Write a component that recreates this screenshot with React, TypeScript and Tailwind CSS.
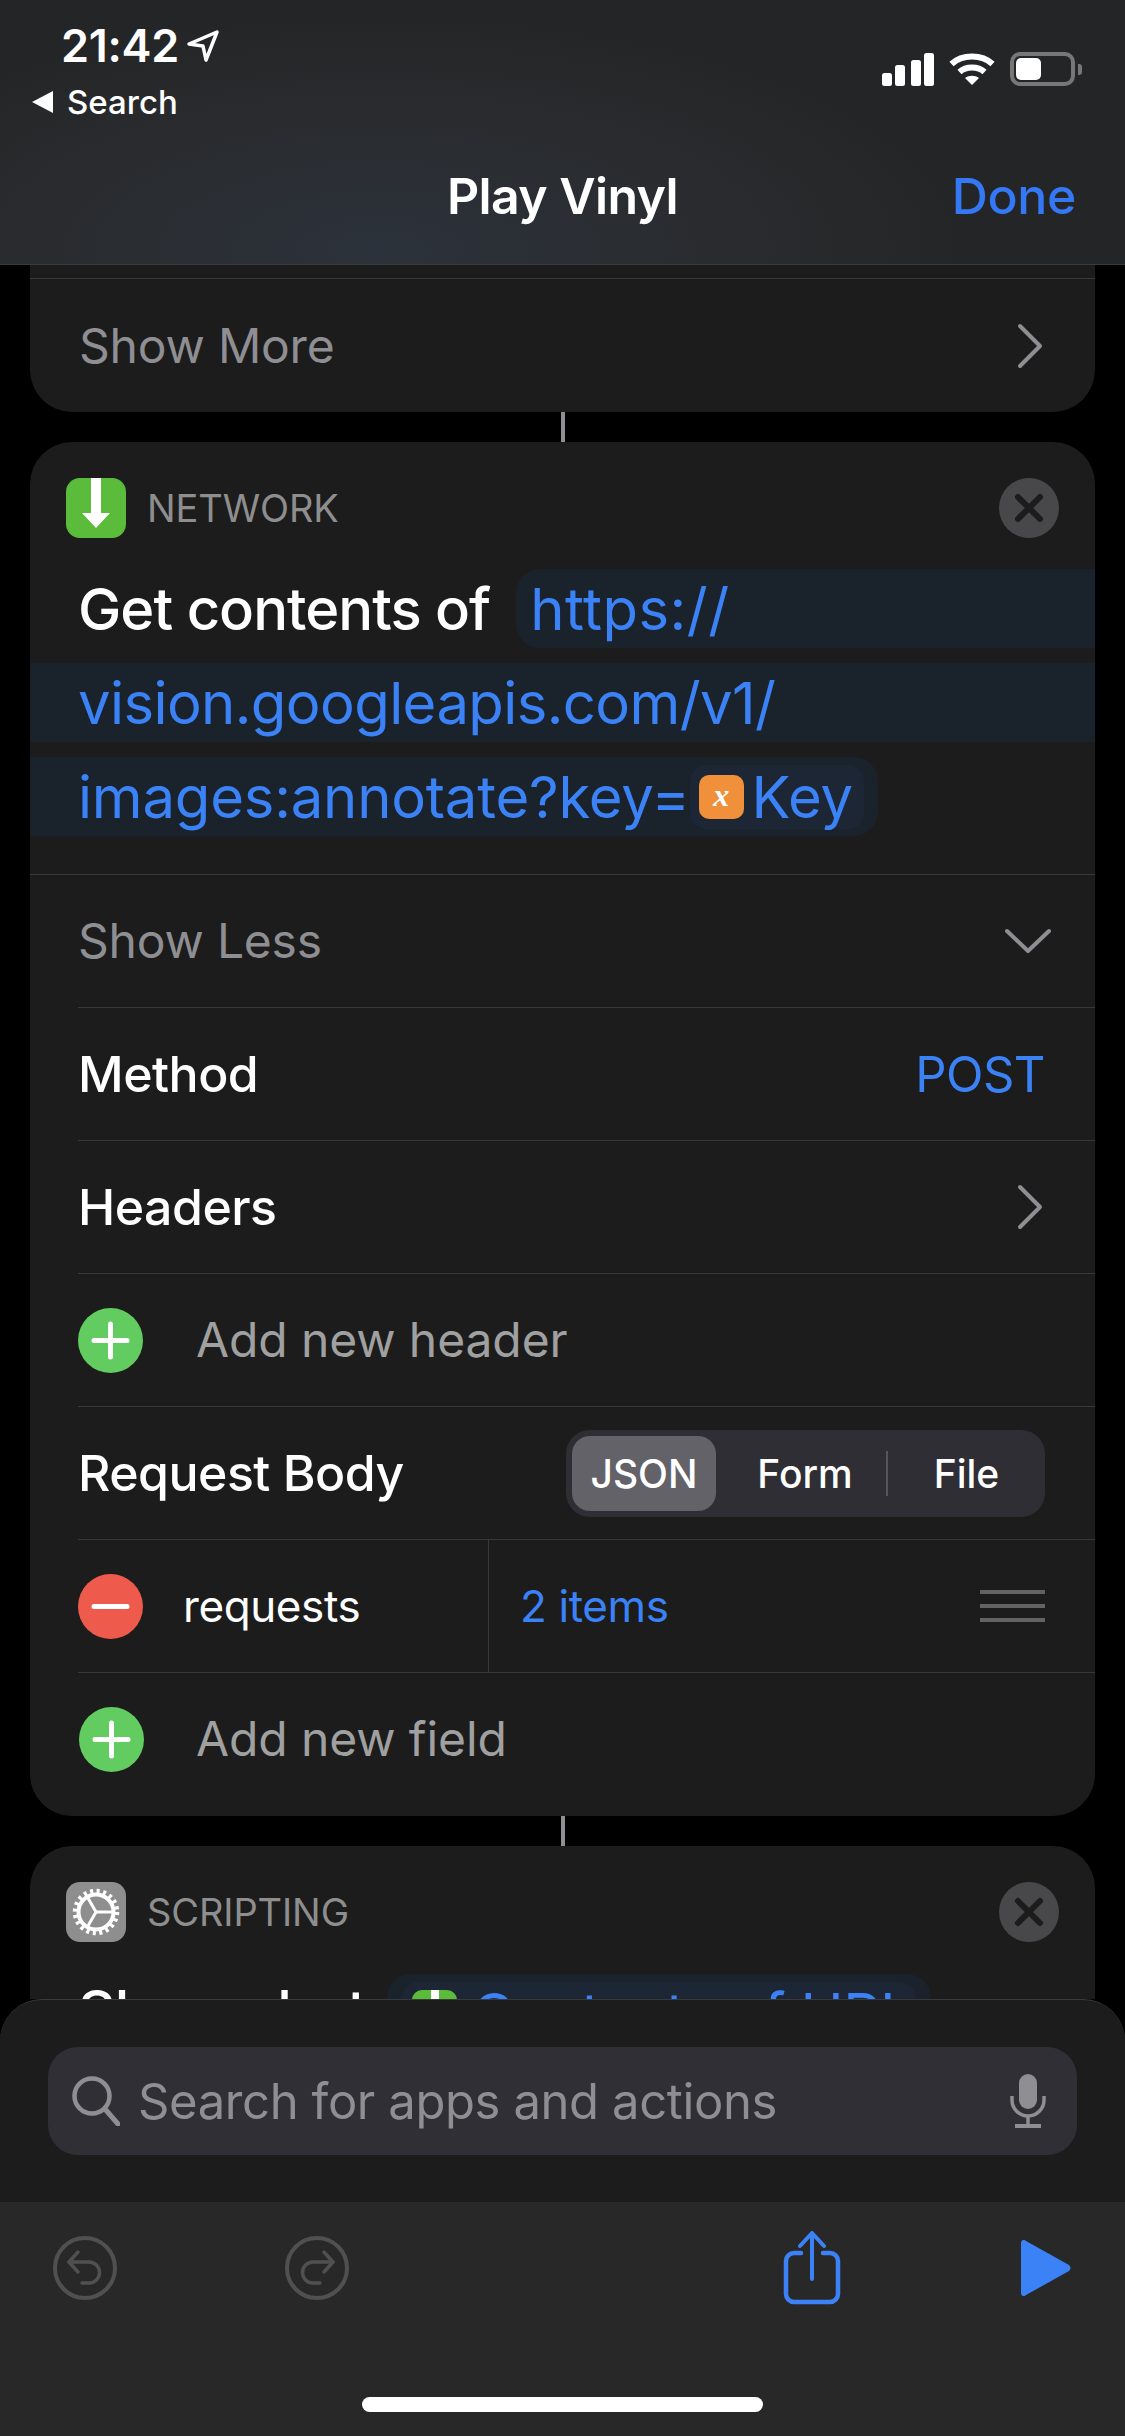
import React from "react";

const font = { fontFamily: "Inter, 'Liberation Sans', sans-serif" };

function Chevron() {
  return (
    <svg width="30" height="46" viewBox="0 0 30 46" fill="none" stroke="#8e8e93" strokeWidth="4" strokeLinecap="round" strokeLinejoin="round">
      <path d="M5 3 L25 23 L5 43" />
    </svg>
  );
}

function CloseBadge() {
  return (
    <div className="flex h-[60px] w-[60px] items-center justify-center rounded-full bg-[#48484a]">
      <svg width="30" height="30" viewBox="0 0 30 30" stroke="#1c1c1c" strokeWidth="6" strokeLinecap="round">
        <path d="M4 4 L26 26 M26 4 L4 26" />
      </svg>
    </div>
  );
}

function RoundAction({ color, plus }: { color: string; plus?: boolean }) {
  return (
    <svg width="65" height="65" viewBox="0 0 65 65" className="shrink-0">
      <circle cx="32.5" cy="32.5" r="32.5" fill={color} />
      <path d={plus ? "M16 32.5 H49 M32.5 16 V49" : "M16 32.5 H49"} stroke="#fff" strokeWidth="5" strokeLinecap="round" />
    </svg>
  );
}

function Gear() {
  const spokes = [0, 120, 240];
  return (
    <svg width="60" height="60" viewBox="0 0 60 60">
      <rect width="60" height="60" rx="14" fill="#8e8e8e" />
      <circle cx="30" cy="30" r="17.5" fill="none" stroke="#fff" strokeWidth="4" />
      <circle cx="30" cy="30" r="20.5" fill="none" stroke="#fff" strokeWidth="5.5" strokeDasharray="3 3.44" />
      {spokes.map((a) => (
        <line
          key={a}
          x1="30"
          y1="30"
          x2={30 + 17 * Math.cos((a * Math.PI) / 180)}
          y2={30 - 17 * Math.sin((a * Math.PI) / 180)}
          stroke="#fff"
          strokeWidth="3"
        />
      ))}
    </svg>
  );
}

function CardHeader({ icon, label }: { icon: React.ReactNode; label: string }) {
  return (
    <div className="flex h-[60px] items-center pl-[36px] pr-[36px]">
      {icon}
      <span className="ml-[21px] text-[38px] font-normal leading-none tracking-[-0.1px] text-[#8e8e8e]">{label}</span>
      <div className="ml-auto">
        <CloseBadge />
      </div>
    </div>
  );
}

function Row({ children }: { children: React.ReactNode }) {
  return <div className="ml-[48px] flex h-[133px] items-center border-b border-[#38383a] pr-[50px]">{children}</div>;
}

export default function App() {
  return (
    <div className="flex h-[2436px] w-[1125px] flex-col overflow-hidden bg-black text-white" style={font}>
      {/* nav */}
      <header className="h-[265px] shrink-0 bg-[radial-gradient(ellipse_600px_240px_at_380px_250px,#2c323b_0%,#292b2e_60%,#242526_100%)] border-b border-[#3a3a3c]">
        <div className="flex items-start justify-between">
          <div className="pl-[32px] pt-[22px]">
            <div className="flex items-center pl-[29px]">
              <span className="text-[45px] font-semibold leading-[48px] tracking-[-0.3px]">21:42</span>
              <svg width="34" height="34" viewBox="0 0 34 34" className="ml-[7px]" fill="none" stroke="#fff" strokeWidth="3.5" strokeLinejoin="round">
                <path d="M3 15 L31 3 L20 31 L17 17 Z" />
              </svg>
            </div>
            <div className="mt-[12px] flex items-center">
              <svg width="21" height="22" viewBox="0 0 21 22" fill="#fff">
                <path d="M0 11 L21 0 V22 Z" />
              </svg>
              <span className="ml-[14px] text-[33px] font-medium leading-[40px]">Search</span>
            </div>
          </div>
          <div className="flex items-center pr-[43px] pt-[52px]">
            <svg width="52" height="34" viewBox="0 0 52 34" fill="#fff">
              <rect x="0" y="21" width="10" height="13" rx="2.5" />
              <rect x="13" y="13" width="10" height="21" rx="2.5" />
              <rect x="29" y="8" width="10" height="26" rx="2.5" />
              <rect x="42" y="1" width="10" height="33" rx="2.5" />
            </svg>
            <svg width="46" height="34" viewBox="0 0 46 34" fill="none" stroke="#fff" strokeWidth="6" className="ml-[15px]">
              <path d="M2.5 12 C13 2 33 2 43.5 12" />
              <path d="M10.5 20 C17 14 29 14 35.5 20" />
              <path d="M23 33 L16 26 C20 23 26 23 30 26 Z" fill="#fff" stroke="none" />
            </svg>
            <div className="ml-[15px] flex items-center">
              <div className="h-[34px] w-[65px] rounded-[10px] border-[4px] border-[#777] p-[2px]">
                <div className="h-full w-[25px] rounded-[5px] bg-white" />
              </div>
              <div className="ml-[3px] h-[11px] w-[4px] rounded-r-[3px] bg-[#777]" />
            </div>
          </div>
        </div>
        <div className="relative mt-[44px] flex h-[60px] items-center justify-center">
          <span className="text-[50px] font-semibold leading-none tracking-[-0.6px]">Play Vinyl</span>
          <span className="absolute right-[49px] text-[50px] font-medium leading-none tracking-[-0.4px] text-[#3478f6]">Done</span>
        </div>
      </header>

      <main className="h-[1734px] shrink-0 overflow-hidden px-[30px]">
        {/* clipped card above */}
        <section className="rounded-b-[42px] bg-[#1c1c1c]">
          <div className="h-[14px] border-b border-[#38383a]" />
          <div className="flex h-[133px] items-center pl-[49px] pr-[50px] text-[#8e8e93]">
            <span className="text-[48px] leading-none tracking-[-0.2px]">Show More</span>
            <div className="ml-auto">
              <Chevron />
            </div>
          </div>
        </section>
        <div className="mx-auto h-[30px] w-[4px] bg-[#8e8e93]" />

        <section className="rounded-[42px] bg-[#1c1c1c] pt-[36px]">
          <CardHeader
            label="NETWORK"
            icon={
              <svg width="60" height="60" viewBox="0 0 60 60">
                <rect width="60" height="60" rx="14" fill="#5bbb3a" />
                <path d="M25 0 H35 V35 H44 L30 50 L16 35 H25 Z" fill="#fff" />
              </svg>
            }
          />
          <div className="mt-[31px] flex h-[79px] items-center text-[58px] leading-none">
            <span className="ml-[48px] font-medium tracking-[-1px]">Get contents of</span>
            <div className="ml-[26px] flex h-full flex-1 items-center rounded-l-[24px] bg-[#1a222c] pl-[14px] tracking-[0.5px] text-[#3b82f6]">https://</div>
          </div>
          <div className="mt-[15px] flex h-[79px] items-center bg-[#1a222c] pl-[48px] text-[58px] leading-none tracking-[-0.6px] text-[#3b82f6]">
            vision.googleapis.com/v1/
          </div>
          <div className="mt-[15px] flex h-[79px] w-[848px] items-center rounded-r-[24px] bg-[#1a222c] pl-[48px] text-[58px] leading-none tracking-[-0.2px] text-[#3b82f6]">
            images:annotate?key=
            <div className="flex h-[64px] items-center rounded-[16px] bg-[#1c2635] pl-[9px] pr-[11px]">
              <div className="flex h-[44px] w-[45px] items-center justify-center rounded-[10px] bg-[#f0903a] pb-[4px] text-[32px] font-bold italic text-white" style={{ fontFamily: "'Liberation Serif', serif" }}>
                x
              </div>
              <span className="ml-[8px]">Key</span>
            </div>
          </div>

          <div className="mt-[38px] border-t border-[#38383a]" />
          <Row>
            <span className="text-[48px] leading-none tracking-[-0.2px] text-[#8e8e93]">Show Less</span>
            <svg width="46" height="26" viewBox="0 0 46 26" fill="none" stroke="#8e8e93" strokeWidth="4" strokeLinecap="round" strokeLinejoin="round" className="ml-auto mr-[-6px]">
              <path d="M2 3 L23 23 L44 3" />
            </svg>
          </Row>
          <Row>
            <span className="text-[50px] font-medium leading-none tracking-[-0.5px]">Method</span>
            <span className="ml-auto text-[49px] leading-none tracking-[-0.5px] text-[#3b82f6]">POST</span>
          </Row>
          <Row>
            <span className="text-[50px] font-medium leading-none tracking-[-0.5px]">Headers</span>
            <div className="ml-auto">
              <Chevron />
            </div>
          </Row>
          <Row>
            <RoundAction color="#62cc60" plus />
            <span className="ml-[53px] text-[48px] leading-none tracking-[-0.1px] text-[#a0a0a0]">Add new header</span>
          </Row>
          <Row>
            <span className="text-[50px] font-medium leading-none tracking-[-0.5px]">Request Body</span>
            <div className="ml-auto flex h-[87px] w-[479px] items-center rounded-[24px] bg-[#2f2e34] pl-[6px] text-[39px] font-medium leading-none">
              <div className="flex h-[75px] w-[144px] items-center justify-center rounded-[18px] bg-[#636268]">JSON</div>
              <div className="flex w-[170px] items-center justify-center pl-[8px]">Form</div>
              <div className="h-[45px] w-[2px] bg-[#55555a]" />
              <div className="flex flex-1 items-center justify-center">File</div>
            </div>
          </Row>
          <div className="ml-[48px] flex h-[133px] border-b border-[#38383a] pr-[50px]">
            <div className="flex w-[411px] items-center border-r border-[#38383a]">
              <RoundAction color="#ee5a4b" />
              <span className="ml-[40px] text-[44px] leading-none tracking-[-0.4px]">requests</span>
            </div>
            <div className="flex flex-1 items-center pl-[31px]">
              <span className="text-[44px] leading-none tracking-[-0.4px] text-[#3b82f6]">2 items</span>
              <div className="ml-auto flex w-[65px] flex-col gap-[10px]">
                <div className="h-[4px] bg-[#636366]" />
                <div className="h-[4px] bg-[#636366]" />
                <div className="h-[4px] bg-[#636366]" />
              </div>
            </div>
          </div>
          <div className="ml-[49px] flex h-[143px] items-start pt-[34px]">
            <RoundAction color="#62cc60" plus />
            <span className="ml-[52px] mt-[8px] text-[48px] leading-none tracking-[-0.1px] text-[#a0a0a0]">Add new field</span>
          </div>
        </section>
        <div className="mx-auto h-[30px] w-[4px] bg-[#8e8e93]" />

        <section className="rounded-t-[42px] bg-[#1c1c1c] pt-[36px]">
          <CardHeader label="SCRIPTING" icon={<Gear />} />
          <div className="mt-[32px] flex h-[120px] items-start pl-[48px] text-[58px] leading-none tracking-[-0.6px]">
            <span className="mt-[8px] w-[309px] shrink-0 whitespace-nowrap font-medium">Show alert</span>
            <div className="flex h-[84px] w-[544px] rounded-[24px] bg-[#1a222c] px-[15px] pt-[8px] text-[#3b82f6]">
              <div className="flex h-[64px] flex-1 items-start rounded-[16px] bg-[#1c2635] pl-[10px] pt-[8px]">
                <div className="flex h-[48px] w-[45px] justify-center rounded-[10px] bg-[#5bbb3a]">
                  <div className="h-[25px] w-[8px] bg-white" />
                </div>
                <span className="ml-[15px] -mt-[5px] whitespace-nowrap">Contents of URL</span>
              </div>
            </div>
          </div>
        </section>
      </main>

      <footer className="flex-1 rounded-t-[42px] border-t border-[#3a3a3c] bg-[#1c1c1c]">
        <div className="h-[202px] px-[48px] pt-[47px]">
          <div className="flex h-[108px] items-center rounded-[30px] bg-[#2f2f35] pl-[24px] pr-[31px]">
            <svg width="48" height="50" viewBox="0 0 48 50" fill="none" stroke="#8e8e93" strokeWidth="4.5" strokeLinecap="round">
              <circle cx="20" cy="20" r="17.5" />
              <path d="M33 33 L46 48" strokeWidth="5" />
            </svg>
            <span className="ml-[18px] text-[49px] leading-none tracking-[-0.4px] text-[#8e8e93]">Search for apps and actions</span>
            <svg width="36" height="54" viewBox="0 0 36 54" fill="none" stroke="#8e8e93" strokeWidth="3.5" className="ml-auto">
              <rect x="9" y="0" width="18" height="35" rx="9" fill="#8e8e93" stroke="none" />
              <path d="M2 22 V26 A16 16 0 0 0 34 26 V22" />
              <path d="M18 42 V50" />
              <path d="M5 52 H31" strokeWidth="4" />
            </svg>
          </div>
        </div>
        <div className="relative h-[234px] bg-[#282828]">
          <div className="flex h-[132px] items-center pl-[53px] pr-[54px]">
            <svg width="64" height="64" viewBox="0 0 64 64" fill="none" stroke="#505050" strokeWidth="3.5" strokeLinecap="round" strokeLinejoin="round">
              <circle cx="32" cy="32" r="30" strokeWidth="4" />
              <path d="M25 16 L16 26 L25 36" />
              <path d="M16 26 H36 a10.5 10.5 0 0 1 0 21 H29" />
            </svg>
            <svg width="64" height="64" viewBox="0 0 64 64" fill="none" stroke="#505050" strokeWidth="3.5" strokeLinecap="round" strokeLinejoin="round" className="ml-[168px]">
              <circle cx="32" cy="32" r="30" strokeWidth="4" />
              <path d="M39 16 L48 26 L39 36" />
              <path d="M48 26 H28 a10.5 10.5 0 0 0 0 21 H35" />
            </svg>
            <svg width="58" height="74" viewBox="0 0 58 74" fill="none" stroke="#3b82f6" strokeWidth="4.5" strokeLinecap="round" strokeLinejoin="round" className="ml-[434px]">
              <path d="M18 22 H11 A8 8 0 0 0 3 30 V63 A8 8 0 0 0 11 71 H47 A8 8 0 0 0 55 63 V30 A8 8 0 0 0 47 22 H40" />
              <path d="M29 48 V3 M17 15 L29 2 L41 15" strokeWidth="4" />
            </svg>
            <svg width="50" height="56" viewBox="0 0 50 56" className="ml-auto">
              <path d="M0 3 C0 0 3 -1 5 1 L48 25 C50 27 50 29 48 31 L5 55 C3 57 0 56 0 53 Z" fill="#3b82f6" />
            </svg>
          </div>
          <div className="mx-auto mt-[63px] h-[15px] w-[401px] rounded-full bg-white" />
        </div>
      </footer>
    </div>
  );
}
